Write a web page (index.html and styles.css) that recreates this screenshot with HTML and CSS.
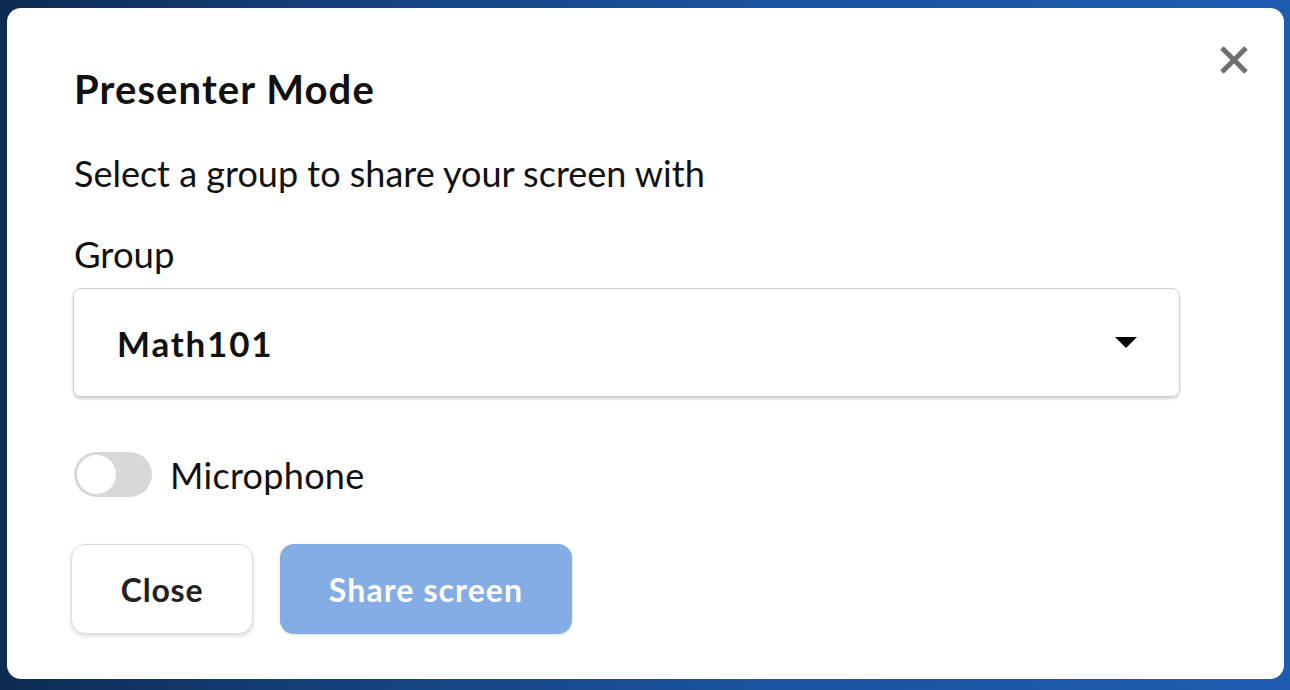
FILE: index.html
```html
<!DOCTYPE html>
<html>
<head>
<meta charset="utf-8">
<link rel="stylesheet" href="styles.css">
</head>
<body>
<div class="backdrop">
  <div class="dialog">
    <button class="close-x" aria-label="Close">
      <svg width="30" height="30" viewBox="0 0 30 30"><path d="M3 3 L27 27 M27 3 L3 27" stroke="#6f6f6f" stroke-width="5" stroke-linecap="butt"/></svg>
    </button>
    <h1 class="title">Presenter Mode</h1>
    <p class="subtitle">Select a group to share your screen with</p>
    <label class="label">Group</label>
    <div class="select">
      <span class="select-value">Math101</span>
      <span class="caret"></span>
    </div>
    <div class="toggle-row">
      <span class="toggle"><span class="knob"></span></span>
      <span class="toggle-label">Microphone</span>
    </div>
    <div class="actions">
      <button class="btn btn-close">Close</button>
      <button class="btn btn-share">Share screen</button>
    </div>
  </div>
</div>
</body>
</html>
```
FILE: styles.css
```css
html, body {
  margin: 0;
  padding: 0;
  width: 1290px;
  height: 690px;
  overflow: hidden;
}
.backdrop {
  width: 1290px;
  height: 690px;
  box-sizing: border-box;
  padding: 8px 6px 11px 7px;
  background: linear-gradient(to right, #0e2b52 0%, #14407a 25%, #1b54a0 60%, #1e5cb0 100%);
  font-family: Lato, "Open Sans", sans-serif;
  color: #111;
}
.dialog {
  position: relative;
  background: #fff;
  border-radius: 14px;
  height: 100%;
  box-sizing: border-box;
  padding: 59px 104px 0 67px;
  display: flex;
  flex-direction: column;
}
.close-x {
  position: absolute;
  top: 37px;
  right: 35px;
  background: none;
  border: 0;
  padding: 0;
  width: 30px;
  height: 30px;
  cursor: pointer;
  display: flex;
}
.title {
  margin: 0;
  font-size: 40px;
  font-weight: 700;
  letter-spacing: 1.1px;
  line-height: 45px;
}
.subtitle {
  margin: 41px 0 0;
  font-size: 36px;
  line-height: 40px;
  font-weight: 400;
}
.label {
  margin-top: 41px;
  font-size: 36.5px;
  line-height: 40px;
}
.select {
  margin-top: 14px;
  margin-left: -1px;
  height: 109px;
  box-sizing: border-box;
  border: 1.5px solid #cfcfcf;
  border-radius: 8px;
  box-shadow: 0 2px 3px rgba(0,0,0,0.18);
  display: flex;
  align-items: center;
  justify-content: space-between;
  padding: 0 42px 0 43px;
}
.select-value {
  font-size: 35px;
  font-weight: 700;
  letter-spacing: 1.8px;
}
.caret {
  width: 0;
  height: 0;
  border-left: 11px solid transparent;
  border-right: 11px solid transparent;
  border-top: 11px solid #000;
}
.toggle-row {
  margin-top: 55px;
  display: flex;
  align-items: center;
  gap: 18px;
}
.toggle {
  width: 78px;
  height: 45px;
  border-radius: 23px;
  background: #dad7d7;
  box-sizing: border-box;
  padding: 3px;
  display: flex;
  align-items: center;
}
.knob {
  width: 39px;
  height: 39px;
  border-radius: 50%;
  background: #fff;
}
.toggle-label {
  font-size: 36px;
  line-height: 40px;
  letter-spacing: 0.3px;
}
.actions {
  margin-top: 47px;
  display: flex;
  gap: 27px;
  margin-left: -3px;
}
.btn {
  height: 90px;
  border-radius: 14px;
  font-family: Lato, "Open Sans", sans-serif;
  font-weight: 700;
  font-size: 32px;
  cursor: pointer;
}
.btn-close {
  width: 182px;
  background: #fff;
  color: #222;
  border: 1.5px solid #dcdcdc;
  box-shadow: 0 2px 4px rgba(0,0,0,0.15);
  letter-spacing: 0.8px;
}
.btn-share {
  width: 292px;
  background: #84ade6;
  color: #fff;
  border: 0;
  box-shadow: 0 1px 3px rgba(0,0,0,0.12);
  letter-spacing: 1.1px;
}
```
